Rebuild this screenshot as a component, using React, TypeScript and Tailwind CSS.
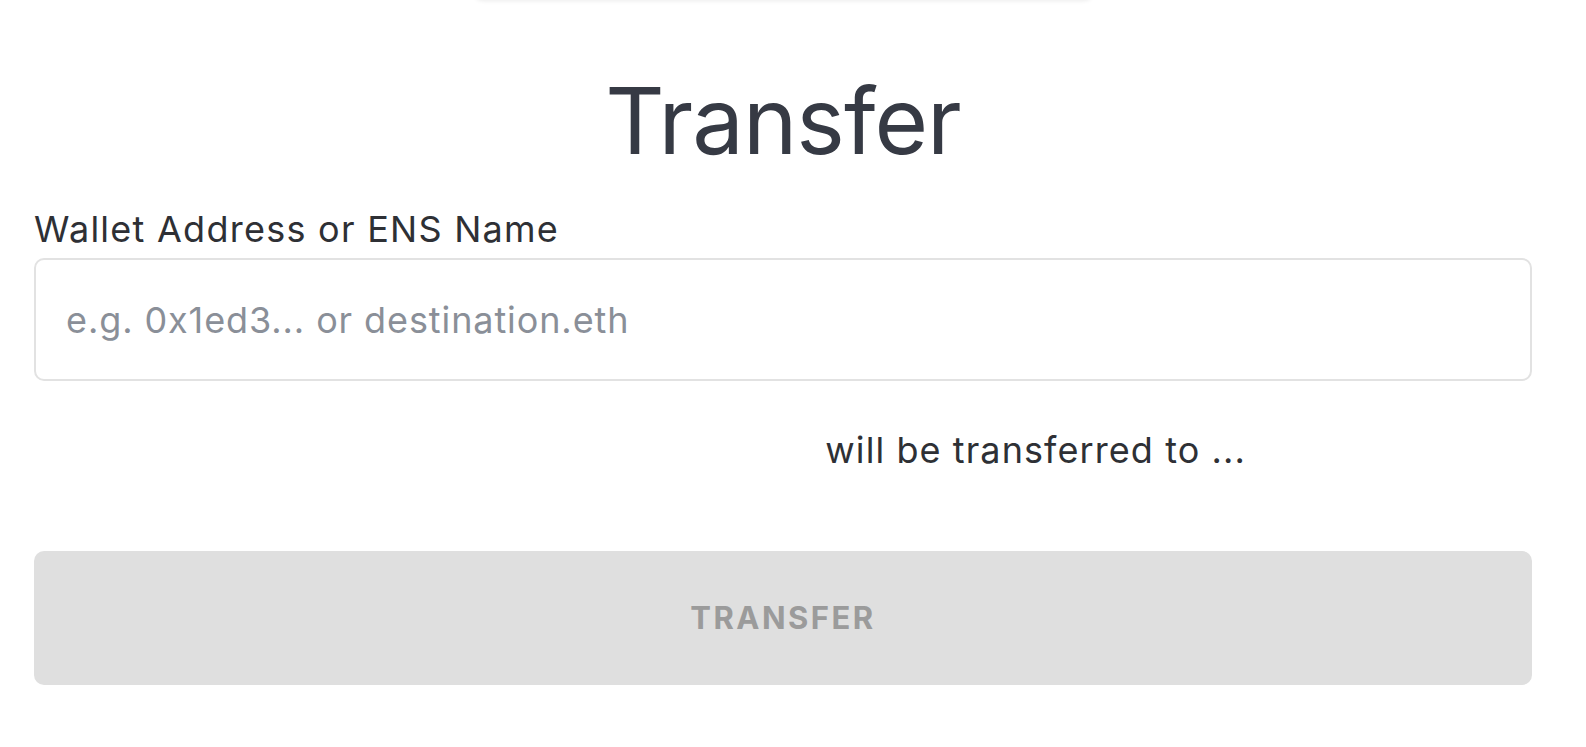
export default function App() {
  return (
    <div className="min-h-screen bg-white pl-[34px] pr-[54px] font-['Inter',sans-serif]">
      {/* bottom edge of the card above */}
      <div className="mx-auto -mt-[20px] h-[20px] w-[623px] rounded-b-xl bg-white shadow-[0_1px_4px_rgba(0,0,0,0.08)]" />

      <h1 className="mt-[71px] text-center text-[92px] font-normal leading-[100px] tracking-[-0.01em] text-[#363a44]">
        Transfer
      </h1>

      <label className="mt-[44px] block text-[36px] leading-[28px] tracking-[0.035em] text-[#2e3035]">
        Wallet Address or ENS Name
      </label>
      <input
        type="text"
        placeholder="e.g. 0x1ed3... or destination.eth"
        className="mt-[15px] block h-[123px] w-full rounded-[10px] border-2 border-[#e2e2e2] px-[30px] text-[36px] tracking-[0.025em] text-[#2e3035] outline-none placeholder:text-[#8a8f98]"
      />

      <p className="mt-[49px] text-center text-[36px] leading-[40px] tracking-[0.03em] text-[#2e3035]">
        <span className="inline-block w-[494px] text-white">&nbsp;</span> will be transferred to ...
      </p>

      <button
        disabled
        className="mt-[81px] block h-[134px] w-full rounded-[10px] bg-[#dfdfdf] text-[31px] font-bold tracking-[0.08em] text-[#9b9b9b]"
      >
        TRANSFER
      </button>
    </div>
  )
}
